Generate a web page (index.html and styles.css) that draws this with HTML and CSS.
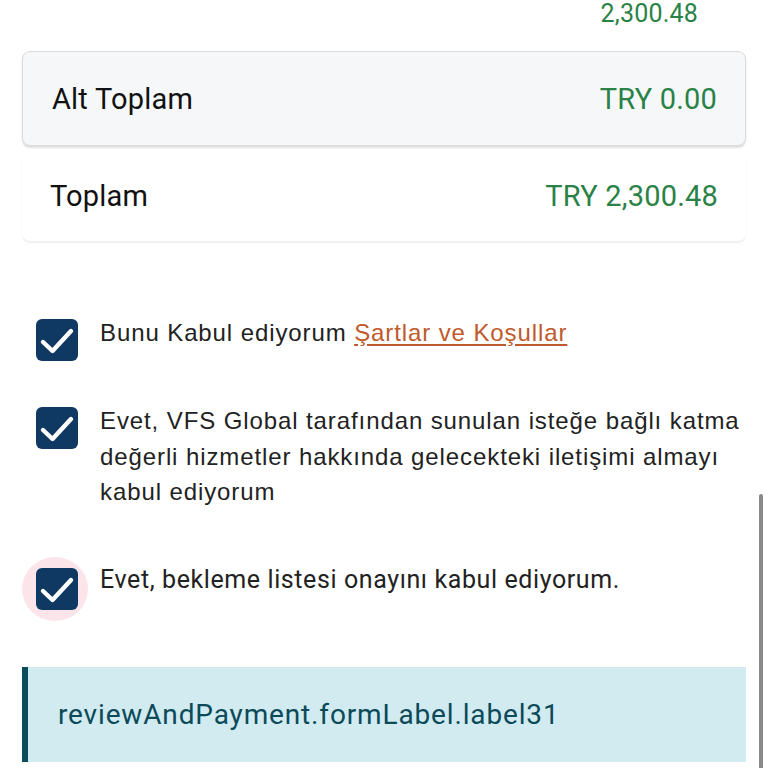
FILE: index.html
```html
<!DOCTYPE html>
<html>
<head>
    <link rel="stylesheet" href="styles.css">
    <title>Review and payment</title>
</head>
<body>
    <div class="page">
        <div class="fee-row">
            <span class="amount">2,300.48</span>
        </div>

        <div class="sum-card sub">
            <span class="sum-label">Alt Toplam</span>
            <span class="amount">TRY 0.00</span>
        </div>
        <div class="sum-card total">
            <span class="sum-label">Toplam</span>
            <span class="amount">TRY 2,300.48</span>
        </div>

        <div class="consents">
            <label class="consent">
                <span class="box">
                    <svg viewBox="0 0 42 42"><path d="M7 23l9.5 9L35 12"/></svg>
                </span>
                <span class="text">Bunu Kabul ediyorum <a href="#">Şartlar ve Koşullar</a></span>
            </label>
            <label class="consent">
                <span class="box">
                    <svg viewBox="0 0 42 42"><path d="M7 23l9.5 9L35 12"/></svg>
                </span>
                <span class="text">Evet, VFS Global tarafından sunulan isteğe bağlı katma değerli hizmetler hakkında gelecekteki iletişimi almayı kabul ediyorum</span>
            </label>
            <label class="consent focused">
                <span class="box">
                    <svg viewBox="0 0 42 42"><path d="M7 23l9.5 9L35 12"/></svg>
                </span>
                <span class="text narrow">Evet, bekleme listesi onayını kabul ediyorum.</span>
            </label>
        </div>

        <div class="info">reviewAndPayment.formLabel.label31</div>
    </div>
    <div class="scrollbar"></div>
</body>
</html>
```

FILE: styles.css
```css
body{
    margin: 0;
    background: #fff;
    font-family: Roboto, "Liberation Sans", sans-serif;
    color: #1b1b1b;
    overflow: hidden;
}
.page{
    padding: 0 22px;
}
.fee-row{
    display: flex;
    justify-content: flex-end;
    padding: 1px 48px 0 0;
    height: 50px;
    font-size: 25px;
    line-height: 26px;
}
.amount{
    color: #2a8246;
}
.sum-card{
    display: flex;
    justify-content: space-between;
    align-items: center;
    padding: 0 28px 0 29px;
    font-size: 29px;
    letter-spacing: 0.2px;
    border-radius: 8px;
}
.fee-row .amount{
    letter-spacing: 0.2px;
}
.sum-card.sub{
    height: 93px;
    background: #f6f7f9;
    border: 1px solid #dcdcdc;
    box-shadow: 0 2px 2px rgba(0,0,0,0.12);
}
.sum-card.total{
    height: 91px;
    margin-top: 4px;
    padding-left: 28px;
    background: #fff;
    box-shadow: 0 2px 2px rgba(0,0,0,0.07);
}
.sum-label{
    color: #111;
}
.consents{
    display: flex;
    flex-direction: column;
    gap: 46px;
    padding: 78px 0 0 14px;
}
.consent{
    position: relative;
    z-index: 0;
    display: flex;
    gap: 22px;
    align-items: flex-start;
}
.box{
    position: relative;
    flex: none;
    width: 42px;
    height: 42px;
    border-radius: 6px;
    background: #0f3962;
}
.box svg{
    display: block;
    width: 42px;
    height: 42px;
    fill: none;
    stroke: #fff;
    stroke-width: 4.4;
    stroke-linecap: round;
    stroke-linejoin: round;
}
.text{
    font-family: "Liberation Sans", Arial, sans-serif;
    font-size: 24px;
    letter-spacing: 0.9px;
    line-height: 35.5px;
    color: #222;
    margin-top: -4px;
}
.text a{
    color: #bf5a2c;
    text-decoration: underline;
    text-underline-offset: 3px;
}
.consent.focused{
    margin-top: 6px;
}
.consent.focused .box{
    margin-top: 6px;
}
.consent.focused .box::before{
    content: "";
    position: absolute;
    left: -14px;
    top: -11px;
    width: 66px;
    height: 64px;
    border-radius: 50%;
    background: #fbe4ea;
    z-index: -1;
}
.text.narrow{
    font-family: Roboto, "Liberation Sans", sans-serif;
    font-size: 25px;
    letter-spacing: 0.6px;
    margin-top: 0;
}
.info{
    margin-top: 57px;
    height: 95px;
    display: flex;
    align-items: center;
    padding-left: 30px;
    background: #d1ebf1;
    border-left: 6px solid #0b4d5c;
    color: #0c4a59;
    font-size: 28px;
    letter-spacing: 0.85px;
}
.scrollbar{
    position: fixed;
    right: 5px;
    top: 494px;
    width: 4px;
    height: 280px;
    border-radius: 2px;
    background: #8a8a8a;
}
```
